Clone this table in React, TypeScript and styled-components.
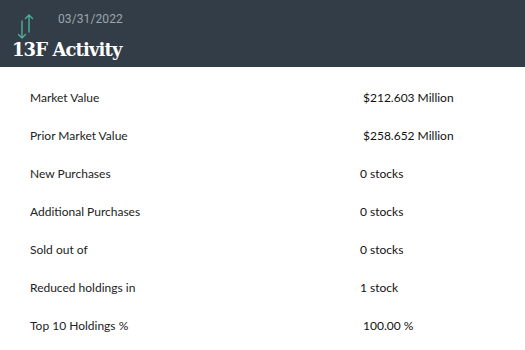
import styled, { createGlobalStyle } from "styled-components";

const GlobalStyle = createGlobalStyle`
  body {
    margin: 0;
    background: #ffffff;
    font-family: Lato, "Open Sans", "Liberation Sans", sans-serif;
  }
`

const rows = [
  { label: "Market Value", value: "$212.603 Million", indent: 3 },
  { label: "Prior Market Value", value: "$258.652 Million", indent: 3 },
  { label: "New Purchases", value: "0 stocks", indent: 0 },
  { label: "Additional Purchases", value: "0 stocks", indent: 0 },
  { label: "Sold out of", value: "0 stocks", indent: 0 },
  { label: "Reduced holdings in", value: "1 stock", indent: 0 },
  { label: "Top 10 Holdings %", value: "100.00 %", indent: 3 },
];

const App = () => {
  return (
    <Page>
      <GlobalStyle />
      <Header>
        <TopLine>
          <SwapIcon width="20" height="28" viewBox="0 0 20 28">
            <path d="M14 20 V3 M10.5 6.5 L14 3 L17.5 6.5" />
            <path d="M7 9 V26 M3.5 22.5 L7 26 L10.5 22.5" />
          </SwapIcon>
          <DateText>03/31/2022</DateText>
        </TopLine>
        <Title>13F Activity</Title>
      </Header>
      <Table>
        {rows.map((r) => (
          <Row key={r.label}>
            <Label>{r.label}</Label>
            <Value $indent={r.indent}>{r.value}</Value>
          </Row>
        ))}
      </Table>
    </Page>
  )
}

const Page = styled.div`
  width: 525px;
  height: 350px;
  overflow: hidden;
  background: #fff;
`
const Header = styled.div`
  height: 67px;
  background: #333d47;
  padding: 0 12px;
  box-sizing: border-box;
  display: flex;
  flex-direction: column;
`
const TopLine = styled.div`
  display: flex;
  align-items: flex-start;
  height: 38px;
  padding-left: 3px;
  padding-top: 12px;
  box-sizing: border-box;
`
const SwapIcon = styled.svg`
  fill: none;
  stroke: #4fae9c;
  stroke-width: 1.4;
  stroke-linecap: round;
  stroke-linejoin: round;
  flex-shrink: 0;
`
const DateText = styled.span`
  margin-left: 23px;
  font-family: Roboto, "Liberation Sans", sans-serif;
  font-size: 12px;
  color: #9ea5ad;
  letter-spacing: 0.1px;
`
const Title = styled.div`
  font-family: "DejaVu Serif", "Liberation Serif", serif;
  font-weight: bold;
  font-size: 18px;
  line-height: 22px;
  color: #ffffff;
  letter-spacing: -0.9px;
  margin-top: 1px;
`
const Table = styled.div`
  display: flex;
  flex-direction: column;
  padding: 11px 0 0 30px;
`
const Row = styled.div`
  display: grid;
  grid-template-columns: 330px 1fr;
  height: 38px;
  align-items: center;
`
const Label = styled.span`
  font-size: 12px;
  color: #222;
`
const Value = styled.span<{ $indent: number }>`
  font-size: 12px;
  color: #111;
  padding-left: ${(p) => p.$indent}px;
`

export default App;
